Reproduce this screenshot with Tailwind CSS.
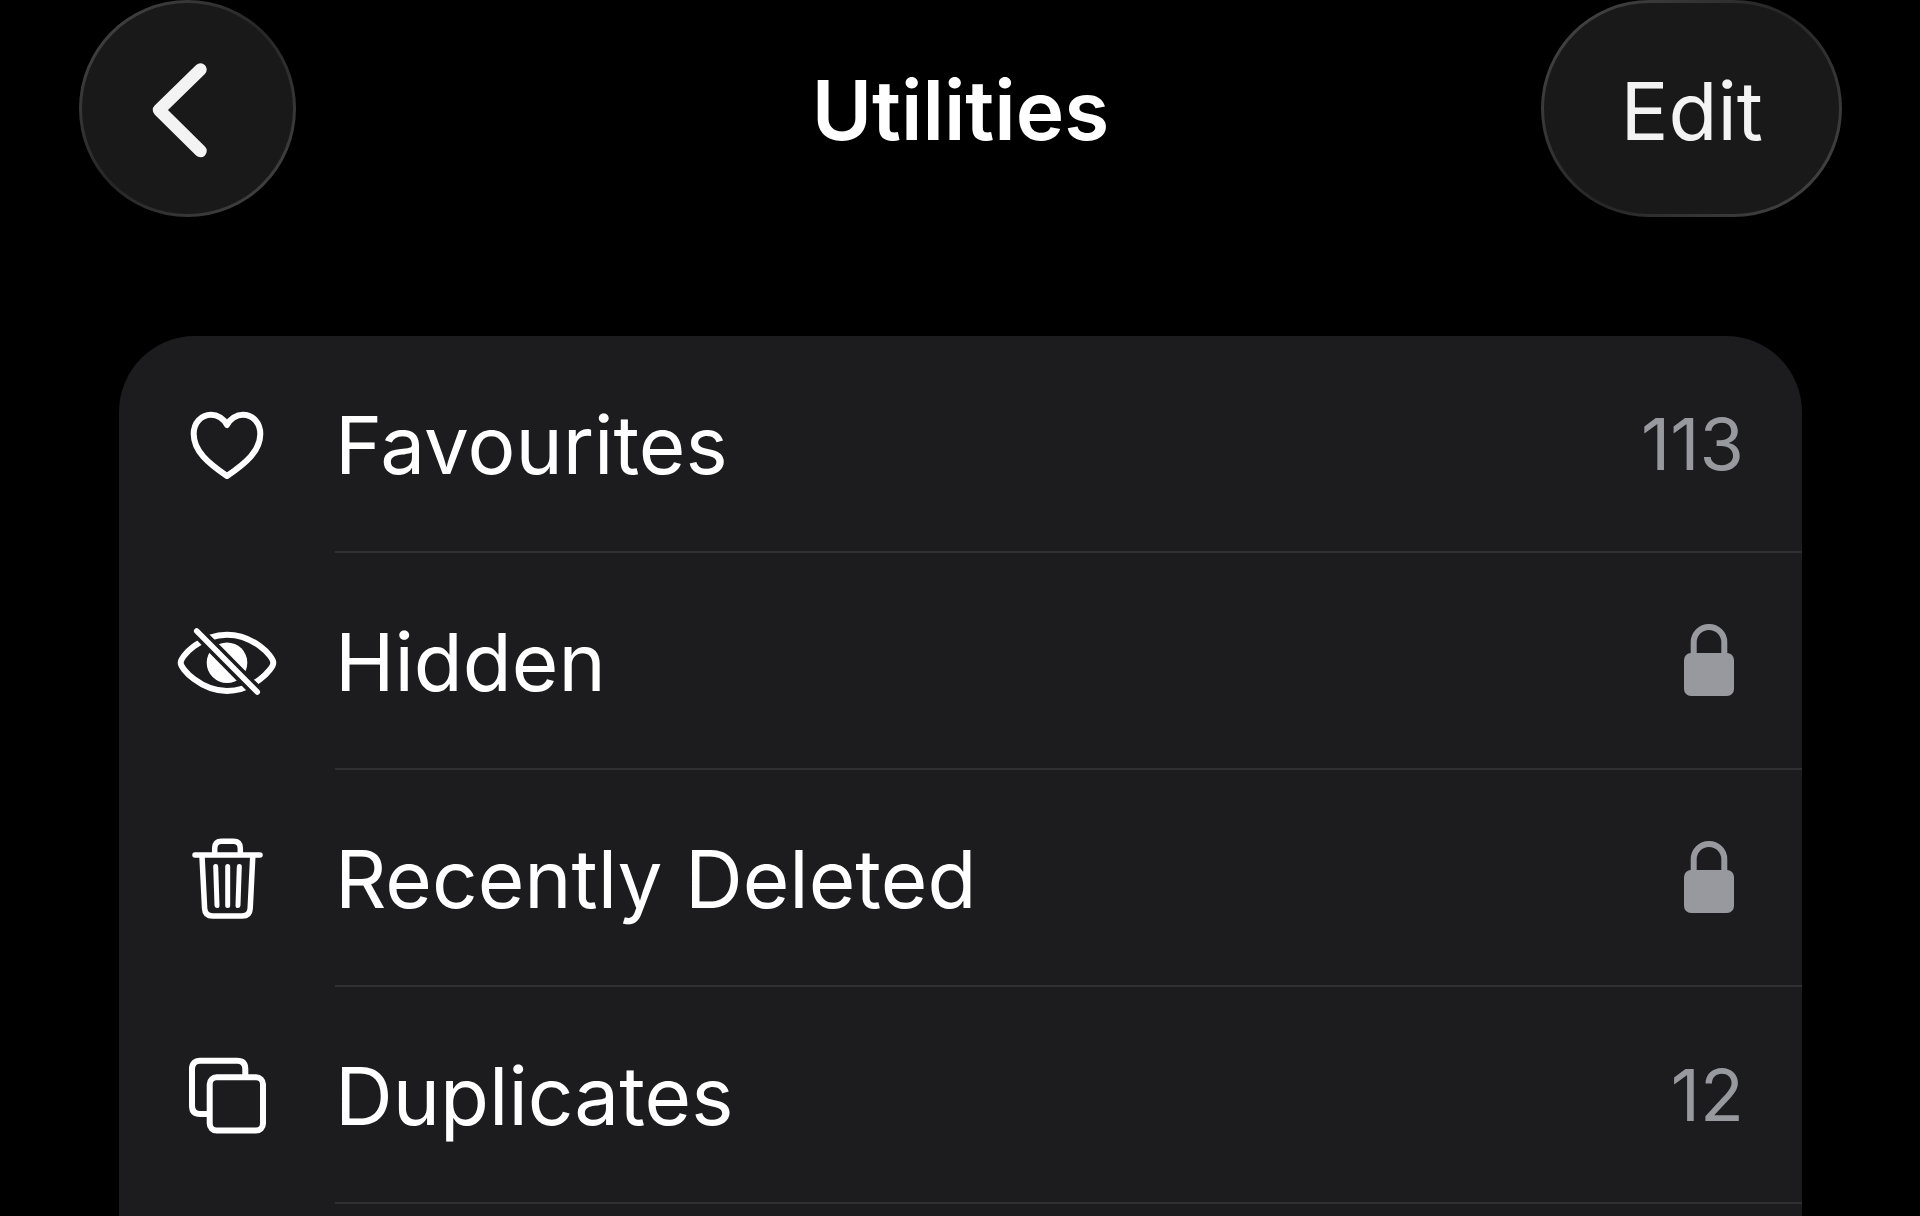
<!DOCTYPE html>
<html lang="en-GB">
<head>
    <meta charset="UTF-8">
    <meta name="viewport" content="width=device-width, initial-scale=1.0">
    <title>Utilities</title>
    <script src="https://cdn.jsdelivr.net/npm/@tailwindcss/browser@4"></script>
</head>
<body class="bg-black text-white font-['Inter','Liberation_Sans',sans-serif]">
    <div class="min-h-screen flex flex-col">
        <header class="grid grid-cols-[1fr_auto_1fr] items-center pl-[79px] pr-[78px]">
            <button type="button" aria-label="Back" class="justify-self-start rounded-full p-[3px] bg-linear-135 from-[#484848] via-[#262626] to-[#484848]">
                <span class="block rounded-full bg-[#191919]">
                    <svg class="size-[211px]" viewBox="3 3 211 211" fill="none" stroke="#f3f3f3" stroke-width="12.500" stroke-linecap="round" stroke-linejoin="round">
                        <path d="M121.500 69.500 80 110l41.500 41"/>
                    </svg>
                </span>
            </button>
            <h1 class="pt-[4px] text-[82px] leading-[100px] font-semibold">Utilities</h1>
            <button type="button" class="justify-self-end rounded-full p-[3px] bg-linear-135 from-[#484848] via-[#262626] to-[#484848]">
                <span class="flex h-[211px] items-center rounded-full bg-[#191919] px-[76px] pt-[4px] text-[80px] leading-[100px] text-[#f3f3f3]">Edit</span>
            </button>
        </header>

        <main class="flex-1 flex flex-col mt-[119px] pl-[119px] pr-[118px]">
            <ul class="flex-1 rounded-t-[76px] bg-[#1c1c1e]">
                <!-- Favourites -->
                <li>
                    <a href="#" class="flex items-center pl-[57px]">
                        <svg class="size-[101px] shrink-0" viewBox="0 1 101 101" fill="none" stroke="#fff" stroke-width="6" stroke-linejoin="round">
                            <path d="M51 32C48 26 41.500 21.700 35 21.700 25 21.700 17.700 30 17.700 41 17.700 58 32 70 51 83 70 70 84.300 58 84.300 41 84.300 30 77 21.700 67 21.700 60.500 21.700 54 26 51 32Z"/>
                        </svg>
                        <span class="ml-[58px] flex h-[217px] flex-1 items-center justify-between border-b-2 border-[#303032] pr-[58px]">
                            <span class="pt-[2px] text-[80px] leading-[100px]">Favourites</span>
                            <span class="text-[72px] leading-[100px] text-[#98989f]">113</span>
                        </span>
                    </a>
                </li>
                <!-- Hidden -->
                <li>
                    <a href="#" class="flex items-center pl-[57px]">
                        <svg class="size-[101px] shrink-0" viewBox="0 1 101 101" fill="none">
                            <path d="M4.700 52.700C4.700 46 25 24.700 51 24.700S97.300 46 97.300 52.700 77 81 51 81 4.700 59 4.700 52.700Z" stroke="#fff" stroke-width="6"/>
                            <circle cx="51" cy="52.700" r="20.300" fill="#fff"/>
                            <path d="M14 14 88 89" stroke="#1c1c1e" stroke-width="13"/>
                            <path d="M20.700 21 81.300 82" stroke="#fff" stroke-width="5.500" stroke-linecap="round"/>
                        </svg>
                        <span class="ml-[58px] flex h-[217px] flex-1 items-center justify-between border-b-2 border-[#303032] pr-[58px]">
                            <span class="pt-[2px] text-[80px] leading-[100px]">Hidden</span>
                            <svg class="mr-[10px] h-[75px] w-[50px]" viewBox="0 2 50 75" role="img" aria-label="Locked">
                                <rect y="32" width="50" height="43" rx="7" fill="#98989f"/>
                                <path d="M9.700 33V21.300a15.300 15.300 0 0 1 30.600 0V33" fill="none" stroke="#98989f" stroke-width="6"/>
                            </svg>
                        </span>
                    </a>
                </li>
                <!-- Recently Deleted -->
                <li>
                    <a href="#" class="flex items-center pl-[57px]">
                        <svg class="size-[101px] shrink-0" viewBox="0 1 101 101" fill="none" stroke="#fff" stroke-width="5.500" stroke-linecap="round" stroke-linejoin="round">
                            <path d="M19 28H84M38.700 28V21.300q0-7 7-7h11.600q7 0 7 7V28"/>
                            <path d="M26 29l2.600 52.500q.4 7.500 8 7.500h29.600q7.600 0 8-7.500L76.800 29"/>
                            <path d="M39.700 39.500 41 78.500M51.700 39.500v39M63.300 39.500 62 78.500" stroke-width="5"/>
                        </svg>
                        <span class="ml-[58px] flex h-[217px] flex-1 items-center justify-between border-b-2 border-[#303032] pr-[58px]">
                            <span class="pt-[2px] text-[80px] leading-[100px]">Recently Deleted</span>
                            <svg class="mr-[10px] h-[75px] w-[50px]" viewBox="0 2 50 75" role="img" aria-label="Locked">
                                <rect y="32" width="50" height="43" rx="7" fill="#98989f"/>
                                <path d="M9.700 33V21.300a15.300 15.300 0 0 1 30.600 0V33" fill="none" stroke="#98989f" stroke-width="6"/>
                            </svg>
                        </span>
                    </a>
                </li>
                <!-- Duplicates -->
                <li>
                    <a href="#" class="flex items-center pl-[57px]">
                        <svg class="size-[101px] shrink-0" viewBox="0 1 101 101" fill="none" stroke="#fff" stroke-width="6">
                            <path d="M69.300 33V25q0-8.300-8.300-8.300H24.300q-8.300 0-8.300 8.300v36.700q0 8.300 8.300 8.300H33"/>
                            <rect x="33.700" y="33.300" width="53.300" height="53.300" rx="7"/>
                        </svg>
                        <span class="ml-[58px] flex h-[217px] flex-1 items-center justify-between border-b-2 border-[#303032] pr-[58px]">
                            <span class="pt-[2px] text-[80px] leading-[100px]">Duplicates</span>
                            <span class="text-[72px] leading-[100px] text-[#98989f]">12</span>
                        </span>
                    </a>
                </li>
            </ul>
        </main>
    </div>
</body>
</html>
